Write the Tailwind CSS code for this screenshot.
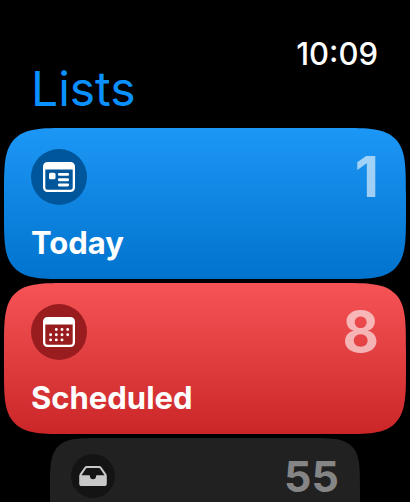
<!DOCTYPE html>
<html lang="en">
<head>
<meta charset="utf-8">
<meta name="viewport" content="width=device-width, initial-scale=1">
<title>Lists</title>
<script src="https://cdn.jsdelivr.net/npm/@tailwindcss/browser@4"></script>
</head>
<body class="flex h-screen flex-col overflow-hidden bg-black font-['Inter','Liberation_Sans',sans-serif] text-white">
<header class="flex h-32 shrink-0 items-start justify-between pr-8 pl-[31px]">
  <h1 class="pt-[65px] text-[48px] leading-12 text-[#0a91ff]">Lists</h1>
  <time datetime="10:09" class="pt-9 text-[31px] leading-9 font-medium">10:09</time>
</header>
<main class="min-h-0 flex-1 overflow-y-auto [scrollbar-width:none]">
  <ul class="flex flex-col gap-1 px-1">
    <li>
      <a href="#today" class="flex h-[151px] flex-col justify-between rounded-[44px] bg-linear-to-b from-[#1c97f6] to-[#0073cd] px-[27px] pt-[21px] pb-4 supports-[corner-shape:squircle]:rounded-[68px] supports-[corner-shape:squircle]:[corner-shape:squircle]">
        <span class="flex items-start justify-between">
          <span class="flex size-14 items-center justify-center rounded-full bg-[#00569a]">
            <svg class="h-[30px] w-8" viewBox="0 0 32 30" aria-hidden="true">
              <path fill="#fff" fill-rule="evenodd" d="M4.500 0h23a4.500 4.500 0 0 1 4.500 4.500v21a4.500 4.500 0 0 1-4.500 4.500h-23A4.500 4.500 0 0 1 0 25.500v-21A4.500 4.500 0 0 1 4.500 0zM2.300 7.600v17.600a2.500 2.500 0 0 0 2.500 2.500h22.400a2.500 2.500 0 0 0 2.500-2.500V7.600z"/>
              <rect x="6" y="10.700" width="6.500" height="6.500" rx="1.500" fill="#fff"/>
              <path d="M16.300 12.400h8.400M16.300 17.700h8.400M16.300 23h8.400" stroke="#fff" stroke-width="2.900" stroke-linecap="round"/>
            </svg>
          </span>
          <span class="text-[56px] leading-14 font-bold text-white/60">1</span>
        </span>
        <span class="text-[31px] leading-10 font-bold">Today</span>
      </a>
    </li>
    <li>
      <a href="#scheduled" class="flex h-[151px] flex-col justify-between rounded-[44px] bg-linear-to-b from-[#f65356] to-[#cb2528] px-[27px] pt-[21px] pb-4 supports-[corner-shape:squircle]:rounded-[68px] supports-[corner-shape:squircle]:[corner-shape:squircle]">
        <span class="flex items-start justify-between">
          <span class="flex size-14 items-center justify-center rounded-full bg-[#991d1f]">
            <svg class="h-[30px] w-8" viewBox="0 0 32 30" aria-hidden="true">
              <path fill="#fff" fill-rule="evenodd" d="M4.500 0h23a4.500 4.500 0 0 1 4.500 4.500v21a4.500 4.500 0 0 1-4.500 4.500h-23A4.500 4.500 0 0 1 0 25.500v-21A4.500 4.500 0 0 1 4.500 0zM2.300 7.600v17.600a2.500 2.500 0 0 0 2.500 2.500h22.400a2.500 2.500 0 0 0 2.500-2.500V7.600z"/>
              <path d="M13.300 12.500h0M19 12.500h0M24.700 12.500h0M7.600 17.700h0M13.300 17.700h0M19 17.700h0M24.700 17.700h0M7.600 22.900h0M13.300 22.900h0M19 22.900h0" stroke="#fff" stroke-width="2.900" stroke-linecap="round"/>
            </svg>
          </span>
          <span class="text-[56px] leading-14 font-bold text-white/60">8</span>
        </span>
        <span class="text-[31px] leading-10 font-bold">Scheduled</span>
      </a>
    </li>
    <li class="px-[46px]">
      <a href="#all" aria-label="All, 55" class="flex h-[116px] items-start justify-between rounded-[34px] bg-[#212122] px-[21px] pt-4 supports-[corner-shape:squircle]:rounded-[52px] supports-[corner-shape:squircle]:[corner-shape:squircle]">
        <span class="flex size-11 items-center justify-center rounded-full bg-[#141414]">
          <svg class="h-5 w-7" viewBox="0 0 28 20" aria-hidden="true">
            <path fill="#c8c8c8" fill-rule="evenodd" d="M8 0h12q1.700 0 2.700 1.400l4.200 6.200q.9 1.300.9 2.800v7q0 2.600-2.600 2.600H2.800Q.2 20 .2 17.400v-7q0-1.500.9-2.800l4.200-6.200Q6.300 0 8 0zm.1 1.900q-.7 0-1.100.6L2.500 9.300h7.600q.9 0 .9.900a3 3 0 0 0 6 0q0-.9.9-.9h7.600L21 2.500q-.4-.6-1.100-.6z"/>
          </svg>
        </span>
        <span class="text-[43px] leading-11 font-bold text-[#858585]">55</span>
      </a>
    </li>
  </ul>
</main>
</body>
</html>
